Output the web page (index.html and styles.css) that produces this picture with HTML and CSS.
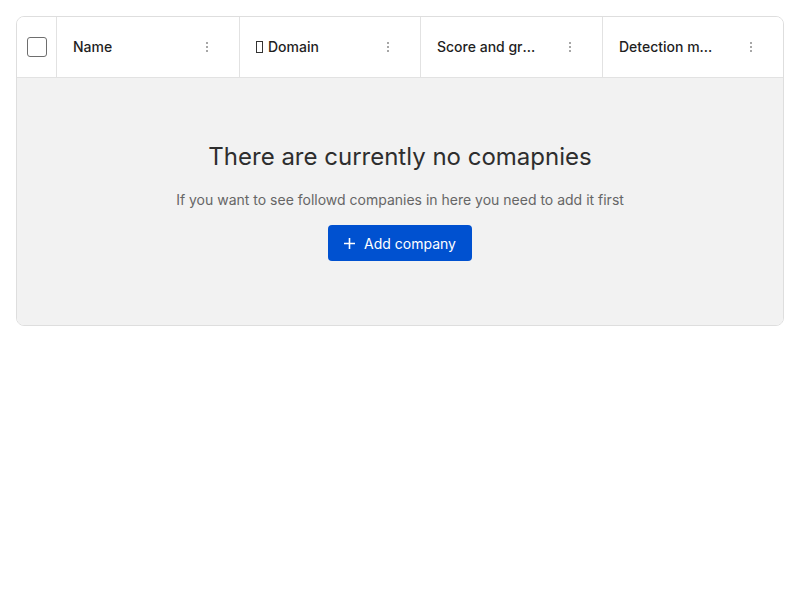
FILE: index.html
```html
<!DOCTYPE html>
<html>
<head>
<meta charset="utf-8">
<link rel="stylesheet" href="styles.css">
</head>
<body>
<div class="table">
  <div class="head">
    <div class="cell check-cell"><span class="checkbox"></span></div>
    <div class="cell col"><span class="title">Name</span><span class="kebab"><i></i><i></i><i></i></span></div>
    <div class="cell col"><span class="title"><span class="tofu"></span>Domain</span><span class="kebab"><i></i><i></i><i></i></span></div>
    <div class="cell col"><span class="title">Score and grade</span><span class="kebab"><i></i><i></i><i></i></span></div>
    <div class="cell col"><span class="title">Detection method</span><span class="kebab"><i></i><i></i><i></i></span></div>
  </div>
  <div class="empty">
    <h2 class="empty-title">There are currently no comapnies</h2>
    <p class="empty-text">If you want to see followd companies in here you need to add it first</p>
    <button class="btn"><svg width="11" height="11" viewBox="0 0 11 11"><path d="M5.5 0v11M0 5.5h11" stroke="#fff" stroke-width="1.6" fill="none"/></svg><span>Add company</span></button>
  </div>
</div>
</body>
</html>
```
FILE: styles.css
```css
* { box-sizing: border-box; }
body {
  margin: 0;
  padding: 16px;
  font-family: Inter, "Noto Sans", sans-serif;
  background: #fff;
}
.table {
  width: 768px;
  border: 1px solid #dedede;
  border-radius: 8px;
  overflow: hidden;
}
.head {
  display: grid;
  grid-template-columns: 39px 183px 181px 182px 1fr;
  height: 61px;
  border-bottom: 1px solid #e2e2e2;
  background: #fff;
}
.cell {
  display: flex;
  align-items: center;
  border-left: 1px solid #e2e2e2;
}
.check-cell {
  border-left: none;
  justify-content: center;
}
.checkbox {
  width: 20px;
  height: 20px;
  border: 1px solid #6e6e6e;
  border-radius: 3px;
  background: #fff;
}
.col {
  padding: 0 31px 0 16px;
  justify-content: space-between;
}
.title {
  display: block;
  font-size: 14px;
  font-weight: 500;
  color: #1f1f1f;
  white-space: nowrap;
  overflow: hidden;
  text-overflow: ellipsis;
  max-width: 100px;
  line-height: 20px;
}
.tofu {
  display: inline-block;
  width: 7px;
  height: 12px;
  border: 1px solid #333;
  margin-right: 5px;
  vertical-align: -1px;
}
.kebab {
  display: flex;
  flex-direction: column;
  gap: 2px;
  flex: none;
}
.kebab i {
  display: block;
  width: 2px;
  height: 2px;
  border-radius: 1px;
  background: #8a8a8a;
}
.empty {
  background: #f2f2f2;
  height: 247px;
  display: flex;
  flex-direction: column;
  align-items: center;
  padding-top: 63px;
}
.empty-title {
  margin: 0;
  font-size: 24px;
  font-weight: 400;
  color: #2e2e2e;
  line-height: 32px;
}
.empty-text {
  margin: 17px 0 0;
  font-size: 14px;
  color: #666;
  line-height: 20px;
}
.btn {
  margin-top: 15px;
  width: 144px;
  height: 36px;
  border: none;
  border-radius: 4px;
  background: #0051d0;
  color: #fff;
  font-family: inherit;
  font-size: 14px;
  display: flex;
  align-items: center;
  justify-content: center;
  gap: 9px;
  padding: 0;
}
```
